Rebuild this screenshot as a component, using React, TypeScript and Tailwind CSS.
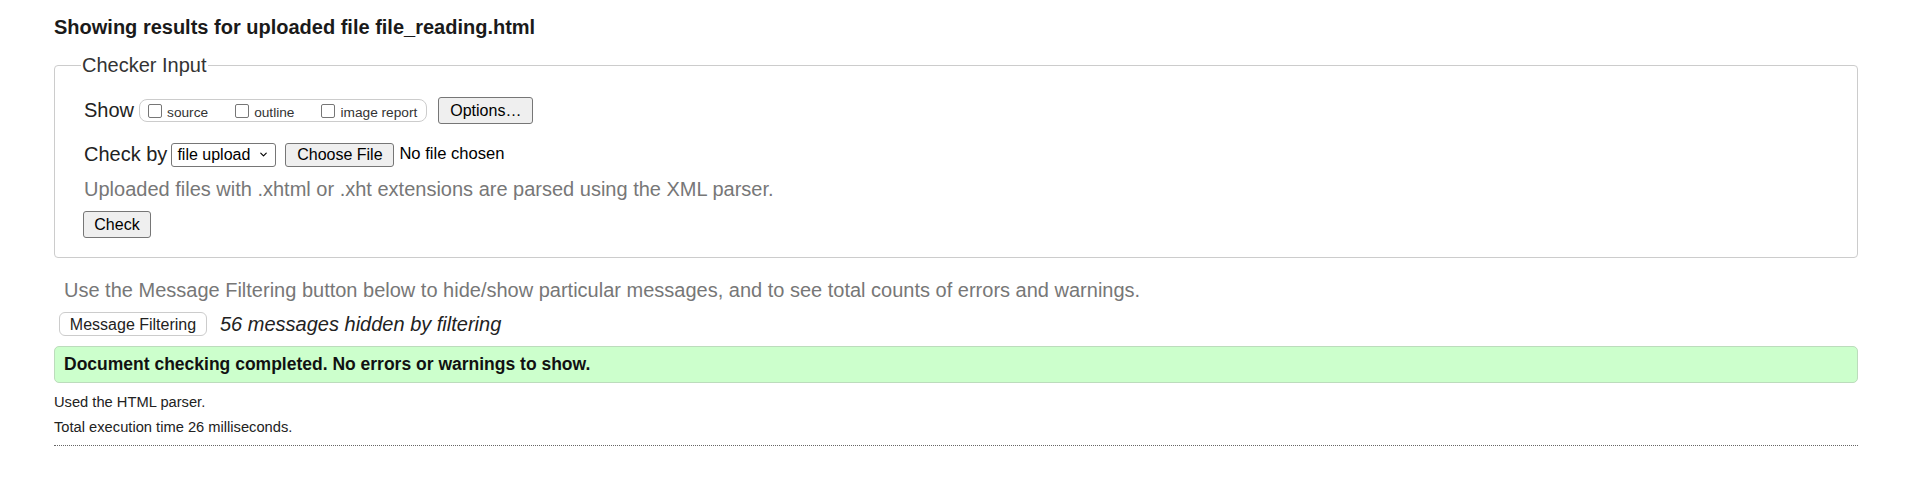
import React from 'react';
import { ChevronDown } from 'lucide-react';

const SHOW_OPTIONS = ['source', 'outline', 'image report'];

function GrayButton({ label, className = '' }: { label: string; className?: string }) {
  return (
    <button
      type="button"
      className={`flex items-center justify-center bg-[#efefef] border border-[#767676] rounded-[3px] text-[16px] text-black ${className}`}
    >
      {label}
    </button>
  );
}

export default function App() {
  return (
    <div className="min-h-screen bg-white font-['Liberation_Sans',Arial,sans-serif] text-[#222]">
      <div className="ml-[54px] w-[1804px] pt-[15px]">
        {/* ── HEADER ── */}
        <h2 className="text-[20px] leading-[24px] font-bold text-[#1a1a1a]">
          Showing results for uploaded file file_reading.html
        </h2>

        {/* ── CHECKER INPUT ── */}
        <fieldset className="mt-[14px] border border-[#cccccc] rounded-[4px] pl-[29px] pb-[19px]">
          <legend className="ml-[-3px] px-[1px] text-[20px] leading-[24px] text-[#333]">Checker Input</legend>

          <div className="mt-[20px] flex items-center h-[27px]">
            <span className="text-[20px] leading-[23px]">Show</span>
            <div className="ml-[5px] flex items-center h-[23px] pl-[8px] pr-[9px] border border-[#cccccc] rounded-[8px] gap-[27px]">
              {SHOW_OPTIONS.map((opt) => (
                <label key={opt} className="flex items-center">
                  <input
                    type="checkbox"
                    className="appearance-none w-[14px] h-[14px] border border-[#767676] rounded-[2px] bg-white"
                  />
                  <span className="ml-[5px] mt-[5px] text-[13.7px] leading-[16px] text-[#333]">{opt}</span>
                </label>
              ))}
            </div>
            <GrayButton label="Options…" className="ml-[11px] w-[95px] h-[27px]" />
          </div>

          <div className="mt-[18px] flex items-center h-[25px]">
            <span className="text-[20px] leading-[23px]">Check by</span>
            <div className="ml-[4px] flex items-center justify-between w-[105px] h-[24px] pl-[5px] pr-[6px] border border-[#767676] rounded-[3px] bg-white text-[16px] text-black">
              <span>file upload</span>
              <ChevronDown className="w-[11px] h-[11px]" strokeWidth={2.5} />
            </div>
            <GrayButton label="Choose File" className="ml-[9px] w-[109px] h-[24px]" />
            <span className="ml-[5px] text-[16.6px] text-black">No file chosen</span>
          </div>

          <p className="mt-[11px] text-[20px] leading-[23px] text-[#777]">
            Uploaded files with .xhtml or .xht extensions are parsed using the XML parser.
          </p>

          <GrayButton label="Check" className="mt-[10px] ml-[-1px] w-[68px] h-[27px]" />
        </fieldset>

        {/* ── FILTERING ── */}
        <p className="mt-[21px] pl-[10px] text-[20px] leading-[23px] text-[#777]">
          Use the Message Filtering button below to hide/show particular messages, and to see total counts of errors and warnings.
        </p>

        <div className="mt-[10px] flex items-center h-[24px]">
          <button
            type="button"
            className="ml-[5px] w-[148px] h-[24px] bg-white border border-[#cccccc] rounded-[6px] text-[16px] text-[#222]"
          >
            Message Filtering
          </button>
          <span className="ml-[13px] text-[20px] italic text-[#222]">56 messages hidden by filtering</span>
        </div>

        {/* ── RESULT ── */}
        <div className="mt-[10px] h-[37px] flex items-center px-[9px] bg-[#ccffcc] border border-[#bcdcbc] rounded-[5px]">
          <span className="text-[17.5px] font-bold text-[#111]">
            Document checking completed. No errors or warnings to show.
          </span>
        </div>

        <p className="mt-[10px] text-[14.7px] leading-[18px] text-[#222]">Used the HTML parser.</p>
        <p className="mt-[7px] text-[14.7px] leading-[18px] text-[#222]">Total execution time 26 milliseconds.</p>

        <div className="mt-[9px] border-t border-dotted border-[#666]" />
      </div>
    </div>
  );
}
